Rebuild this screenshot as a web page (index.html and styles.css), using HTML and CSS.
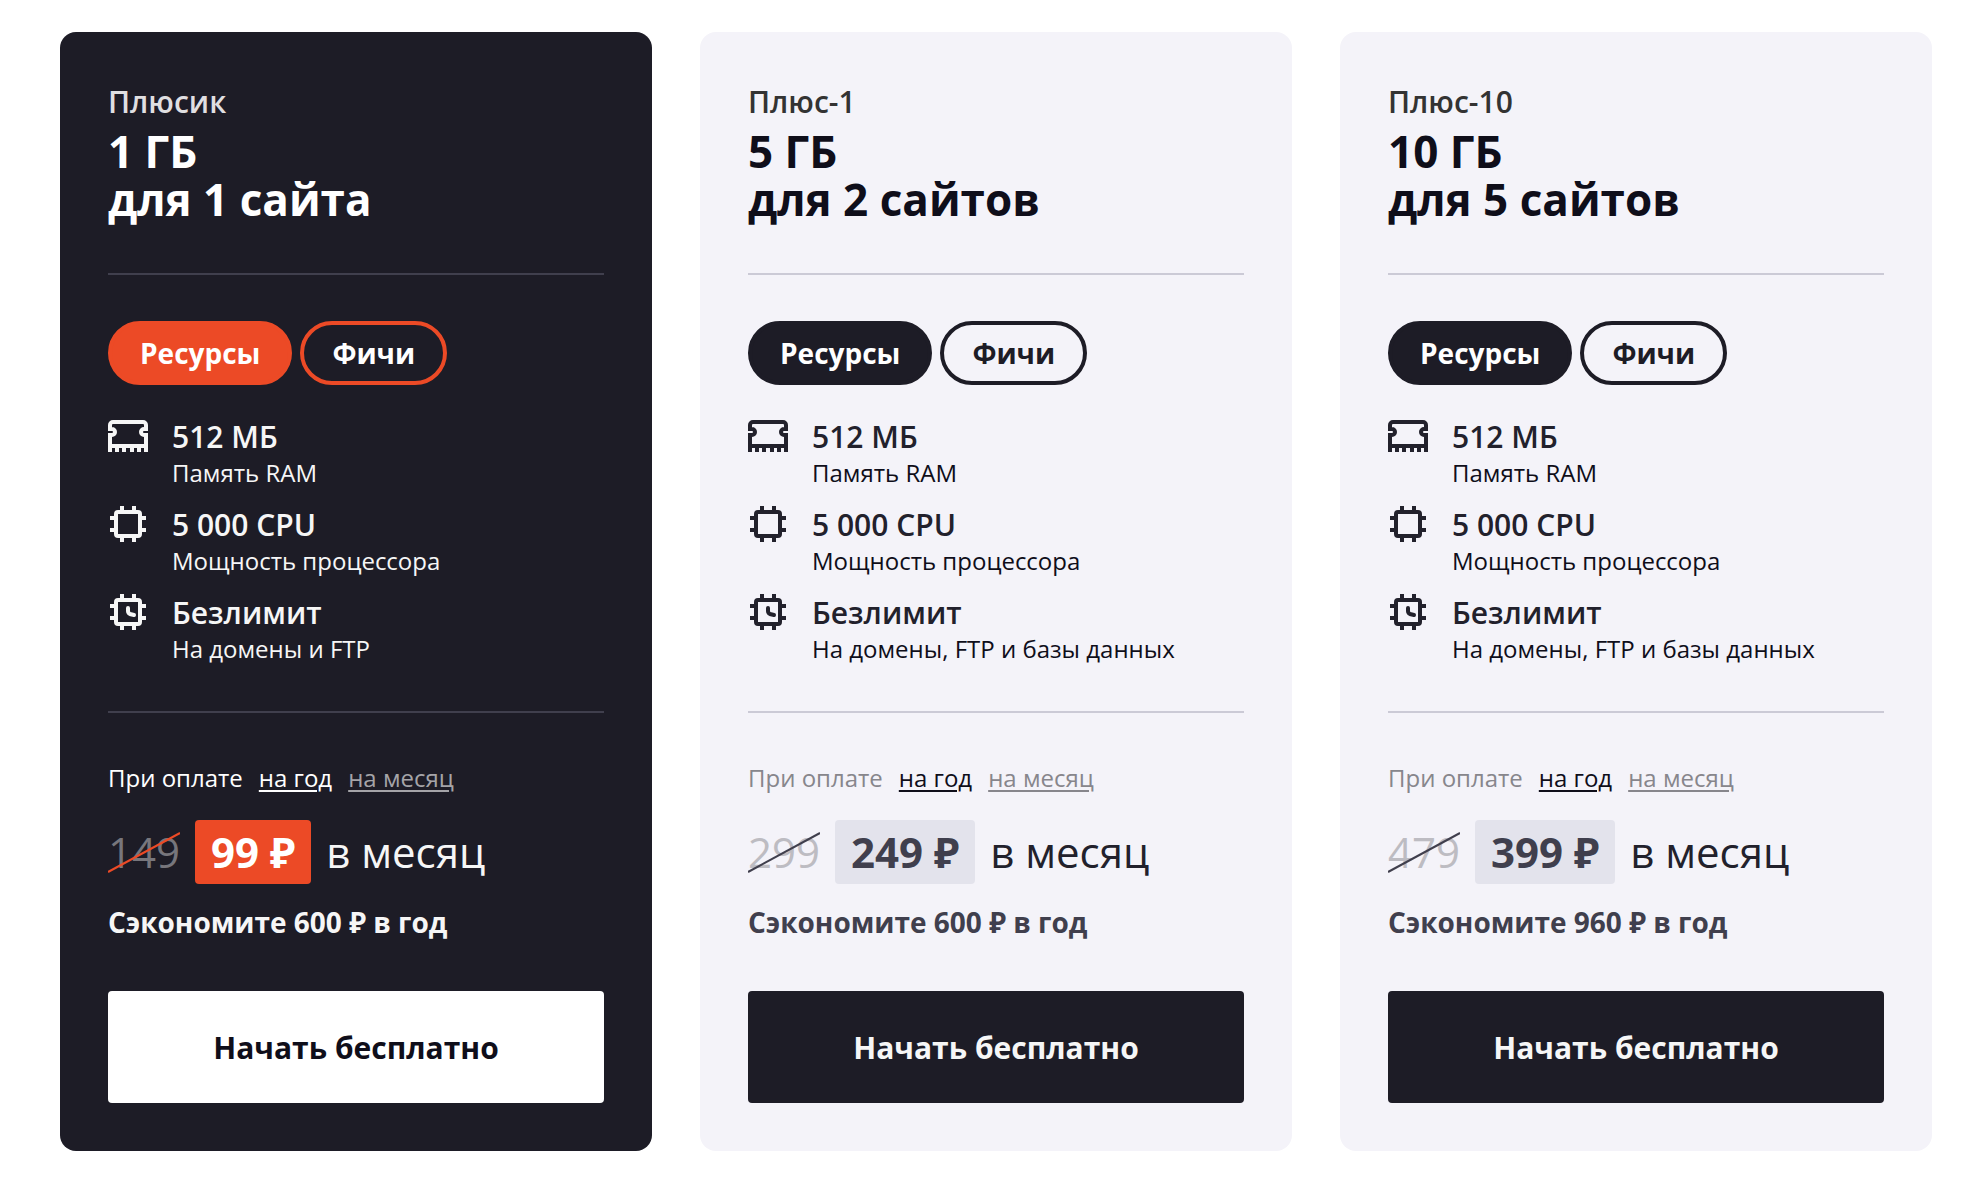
FILE: index.html
```html
<!DOCTYPE html>
<html lang="ru">
<head>
<meta charset="utf-8">
<title>Тарифы хостинга</title>
<link rel="stylesheet" href="styles.css">
</head>
<body>
<svg class="sprite" aria-hidden="true">
  <symbol id="ram" viewBox="0 0 40 32">
    <path d="M2 28V15h2a3 3 0 0 0 0-6H2V5a3 3 0 0 1 3-3h30a3 3 0 0 1 3 3v4h-2a3 3 0 0 0 0 6h2v13" fill="none" stroke="currentColor" stroke-width="4"/>
    <path d="M0 24h40v8h-4v-4h-3v4h-4v-4h-3v4h-4v-4h-4v4h-4v-4h-3v4H7v-4H4v4H0z" fill="currentColor"/>
  </symbol>
  <symbol id="cpu" viewBox="0 0 40 36">
    <rect x="8" y="6" width="24" height="24" rx="2" fill="none" stroke="currentColor" stroke-width="4"/>
    <path d="M14 0v6M26 0v6M14 30v6M26 30v6M2 12h6M2 24h6M32 12h6M32 24h6" fill="none" stroke="currentColor" stroke-width="4"/>
  </symbol>
  <symbol id="clock" viewBox="0 0 40 36">
    <use href="#cpu"/>
    <path d="M20 14v3q0 2 2 3l4 1" fill="none" stroke="currentColor" stroke-width="4" stroke-linecap="round"/>
  </symbol>
</svg>
<main class="plans">
  <article class="card card-accent">
    <header class="head">
      <p class="name">Плюсик</p>
      <h2 class="title">1 ГБ<br>для 1 сайта</h2>
    </header>
    <section class="details">
      <div class="tabs">
        <button type="button" class="tab tab-active">Ресурсы</button>
        <button type="button" class="tab">Фичи</button>
      </div>
      <ul class="features">
        <li class="feature"><svg class="icon icon-ram"><use href="#ram"/></svg><div><p class="value">512 МБ</p><p class="label">Память RAM</p></div></li>
        <li class="feature"><svg class="icon"><use href="#cpu"/></svg><div><p class="value">5 000 CPU</p><p class="label">Мощность процессора</p></div></li>
        <li class="feature"><svg class="icon"><use href="#clock"/></svg><div><p class="value">Безлимит</p><p class="label">На домены и FTP</p></div></li>
      </ul>
    </section>
    <section class="payment">
      <p class="period"><span>При оплате</span><a href="#year" class="option option-active">на год</a><a href="#month" class="option">на месяц</a></p>
      <p class="price"><s class="old">149<svg class="strike" viewBox="0 0 71 41" preserveAspectRatio="none"><path d="M0 40L71 1"/></svg></s><strong class="new">99 ₽</strong><span>в месяц</span></p>
      <p class="saving">Сэкономите 600 ₽ в год</p>
    </section>
    <button type="button" class="start">Начать бесплатно</button>
  </article>

  <article class="card">
    <header class="head">
      <p class="name">Плюс-1</p>
      <h2 class="title">5 ГБ<br>для 2 сайтов</h2>
    </header>
    <section class="details">
      <div class="tabs">
        <button type="button" class="tab tab-active">Ресурсы</button>
        <button type="button" class="tab">Фичи</button>
      </div>
      <ul class="features">
        <li class="feature"><svg class="icon icon-ram"><use href="#ram"/></svg><div><p class="value">512 МБ</p><p class="label">Память RAM</p></div></li>
        <li class="feature"><svg class="icon"><use href="#cpu"/></svg><div><p class="value">5 000 CPU</p><p class="label">Мощность процессора</p></div></li>
        <li class="feature"><svg class="icon"><use href="#clock"/></svg><div><p class="value">Безлимит</p><p class="label">На домены, FTP и базы данных</p></div></li>
      </ul>
    </section>
    <section class="payment">
      <p class="period"><span>При оплате</span><a href="#year" class="option option-active">на год</a><a href="#month" class="option">на месяц</a></p>
      <p class="price"><s class="old">299<svg class="strike" viewBox="0 0 71 41" preserveAspectRatio="none"><path d="M0 40L71 1"/></svg></s><strong class="new">249 ₽</strong><span>в месяц</span></p>
      <p class="saving">Сэкономите 600 ₽ в год</p>
    </section>
    <button type="button" class="start">Начать бесплатно</button>
  </article>

  <article class="card">
    <header class="head">
      <p class="name">Плюс-10</p>
      <h2 class="title">10 ГБ<br>для 5 сайтов</h2>
    </header>
    <section class="details">
      <div class="tabs">
        <button type="button" class="tab tab-active">Ресурсы</button>
        <button type="button" class="tab">Фичи</button>
      </div>
      <ul class="features">
        <li class="feature"><svg class="icon icon-ram"><use href="#ram"/></svg><div><p class="value">512 МБ</p><p class="label">Память RAM</p></div></li>
        <li class="feature"><svg class="icon"><use href="#cpu"/></svg><div><p class="value">5 000 CPU</p><p class="label">Мощность процессора</p></div></li>
        <li class="feature"><svg class="icon"><use href="#clock"/></svg><div><p class="value">Безлимит</p><p class="label">На домены, FTP и базы данных</p></div></li>
      </ul>
    </section>
    <section class="payment">
      <p class="period"><span>При оплате</span><a href="#year" class="option option-active">на год</a><a href="#month" class="option">на месяц</a></p>
      <p class="price"><s class="old">479<svg class="strike" viewBox="0 0 71 41" preserveAspectRatio="none"><path d="M0 40L71 1"/></svg></s><strong class="new">399 ₽</strong><span>в месяц</span></p>
      <p class="saving">Сэкономите 960 ₽ в год</p>
    </section>
    <button type="button" class="start">Начать бесплатно</button>
  </article>
</main>
</body>
</html>
```

FILE: styles.css
```css
* { box-sizing: border-box; }

body {
  margin: 0;
  background: #fff;
  font-family: "Open Sans", "Noto Sans", sans-serif;
}

p, h2, ul { margin: 0; padding: 0; }
button { font-family: inherit; cursor: pointer; }

.sprite { display: none; }

.plans {
  display: grid;
  grid-template-columns: repeat(3, 1fr);
  gap: 48px;
  padding: 32px 52px 38px 60px;
}

.card {
  --text: #22212c;
  --strong: #0f0e1a;
  --name: #333;
  --line: #cbcad6;
  --muted: #87868c;
  --old: #bdbcc2;
  --main: #1d1c26;
  --tab-text: #1d1c26;
  --badge: #e3e3ec;
  --badge-text: #403f4d;
  --start: #1d1c26;
  --start-text: #f6f6f6;
  --saving: #403f4d;
  --prefix: #87868c;
  --strike: #403f4d;
  display: flex;
  flex-direction: column;
  padding: 48px;
  border-radius: 16px;
  background: #f4f3f9;
  color: var(--text);
}

.card-accent {
  --text: #f6f6f6;
  --strong: #fff;
  --name: #e0dfe1;
  --line: #403f4d;
  --muted: #a5a4a8;
  --old: #77767c;
  --main: #ec4a26;
  --tab-text: #fff;
  --badge: #ec4a26;
  --badge-text: #fff;
  --start: #fff;
  --start-text: #0f0e1a;
  --saving: #f6f6f6;
  --prefix: #fff;
  --strike: #ec4a26;
  background: #1d1c26;
}

.head {
  padding-bottom: 50px;
  border-bottom: 2px solid var(--line);
}

.name { font-size: 30px; line-height: 44px; font-weight: 600; color: var(--name); }
.title { padding-top: 3px; font-size: 44px; line-height: 48px; font-weight: 700; color: var(--strong); }

.details {
  padding: 46px 0;
  border-bottom: 2px solid var(--line);
}

.tabs { display: flex; gap: 8px; }

.tab {
  height: 64px;
  padding: 0 28px;
  border: 4px solid var(--main);
  border-radius: 32px;
  background: transparent;
  color: var(--tab-text);
  font-size: 28px;
  font-weight: 700;
}

.tab-active { background: var(--main); color: #fff; }

.features {
  display: grid;
  gap: 16px;
  padding-top: 32px;
  list-style: none;
}

.feature { display: flex; gap: 24px; }
.icon { flex: none; width: 40px; height: 36px; margin-top: 1px; }
.icon-ram { height: 32px; margin-top: 3px; }
.value { font-size: 30px; line-height: 40px; font-weight: 600; }
.label { font-size: 24px; line-height: 32px; color: var(--strong); }
.card-accent .label { color: var(--text); }

.payment { padding: 47px 0 49px; }

.period {
  display: flex;
  gap: 16px;
  font-size: 24px;
  line-height: 36px;
  color: var(--prefix);
}

.option { color: var(--muted); text-decoration-thickness: 2px; text-underline-offset: 3px; }
.option-active { color: var(--strong); }

.price {
  display: flex;
  align-items: center;
  gap: 15px;
  padding-top: 24px;
  font-size: 42px;
  line-height: 64px;
}

.old { position: relative; color: var(--old); text-decoration: none; }

.strike {
  position: absolute;
  left: 0;
  top: 12px;
  width: 100%;
  height: 41px;
  fill: none;
  stroke: var(--strike);
  stroke-width: 2;
}

.new {
  padding: 0 16px;
  border-radius: 4px;
  background: var(--badge);
  color: var(--badge-text);
  font-weight: 700;
}

.saving { padding-top: 18px; font-size: 28px; line-height: 40px; font-weight: 700; color: var(--saving); }

.start {
  height: 112px;
  border: 0;
  border-radius: 4px;
  background: var(--start);
  color: var(--start-text);
  font-size: 30px;
  font-weight: 700;
}
```
